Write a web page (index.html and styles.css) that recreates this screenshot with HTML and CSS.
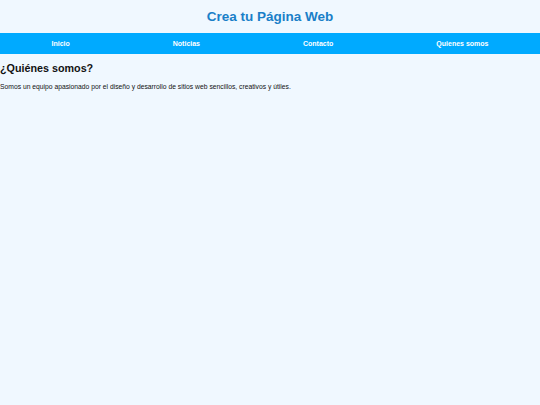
FILE: index.html
```html
<!DOCTYPE html>
<html lang="es">
<head>
<meta charset="utf-8">
<title>Crea tu Página Web</title>
<link rel="stylesheet" href="styles.css">
</head>
<body>
<header class="site-header">
  <h1 class="site-title">Crea tu Página Web</h1>
</header>
<nav class="main-nav">
  <a href="#" class="nav-link">Inicio</a>
  <a href="#" class="nav-link">Noticias</a>
  <a href="#" class="nav-link">Contacto</a>
  <a href="#" class="nav-link">Quienes somos</a>
</nav>
<main class="content">
  <h2 class="section-title">¿Quiénes somos?</h2>
  <p class="section-text">Somos un equipo apasionado por el diseño y desarrollo de sitios web sencillos, creativos y útiles.</p>
</main>
</body>
</html>
```
FILE: styles.css
```css
html, body {
  margin: 0;
  padding: 0;
}
body {
  background: #f0f8ff;
  font-family: "Liberation Sans", Arial, sans-serif;
  color: #111;
  min-height: 405px;
}
.site-header {
  height: 33px;
  display: flex;
  align-items: center;
  justify-content: center;
}
.site-title {
  margin: 0;
  font-size: 13.5px;
  font-weight: bold;
  color: #1a7fc8;
}
.main-nav {
  height: 21px;
  background: #00aaff;
  display: flex;
  align-items: center;
  justify-content: space-around;
}
.nav-link {
  color: #fff;
  font-weight: bold;
  font-size: 7px;
  text-decoration: none;
}
.content {
  padding: 0;
}
.section-title {
  margin: 8px 0 0;
  font-size: 10.75px;
  font-weight: bold;
  line-height: 13px;
}
.section-text {
  margin: 7px 0 0;
  font-size: 6.75px;
  line-height: 9px;
  color: #111;
}
```
